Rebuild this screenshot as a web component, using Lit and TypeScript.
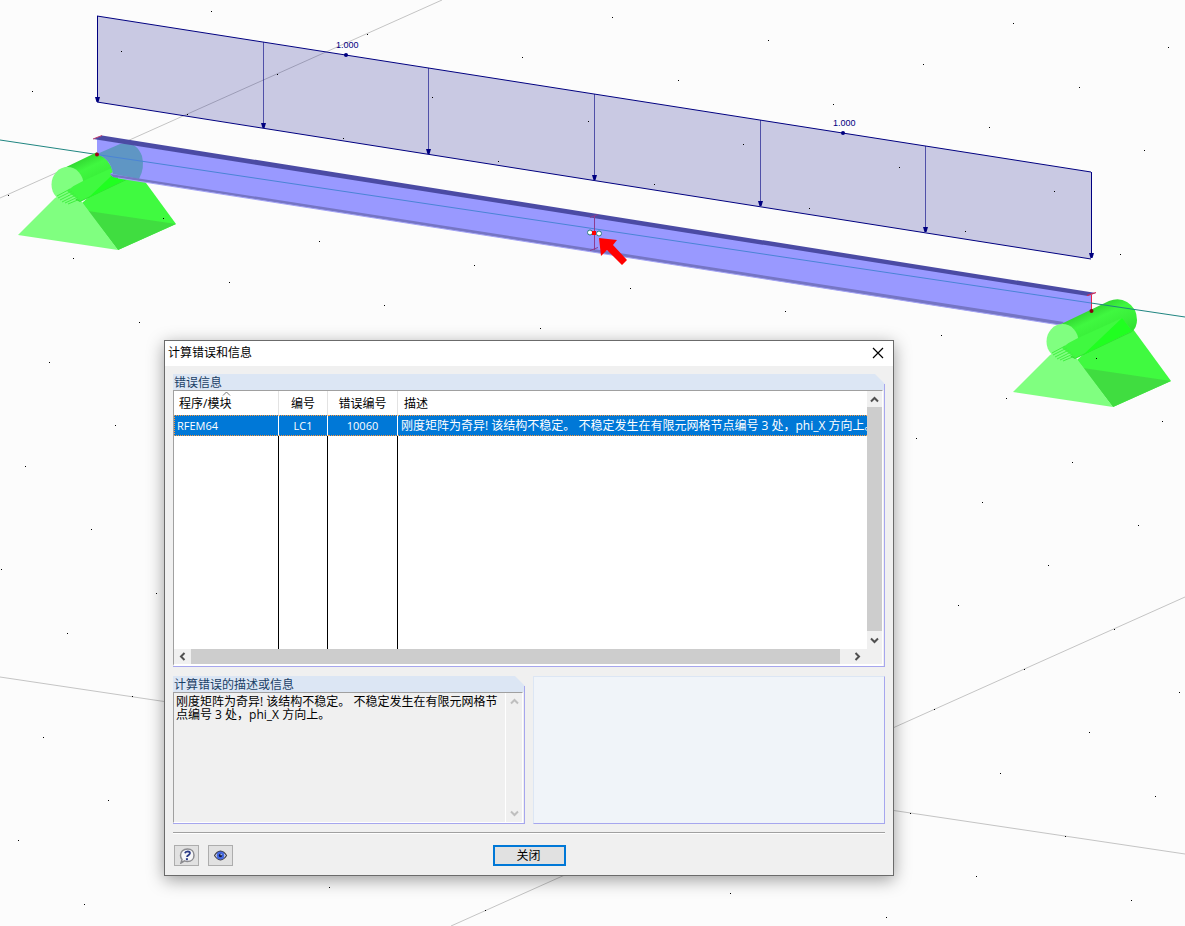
import { LitElement, html, css, svg } from "lit";
import { customElement } from "lit/decorators.js";

const MESSAGE =
  "刚度矩阵为奇异! 该结构不稳定。 不稳定发生在有限元网格节点编号 3 处，phi_X 方向上。";

// Work-plane grid points, generated from the two lattice directions.
function gridPoints() {
  const points: { x: number; y: number }[] = [];
  for (let j = -6; j <= 20; j++) {
    if (j === 0) continue;
    for (let i = -4; i <= 20; i++) {
      const x = Math.round(97.3 + 155.5 * i - 89.8 * j);
      const y = Math.round(154.5 + 23.3 * i + 40.2 * j);
      if (x >= 0 && x < 1185 && y > 0 && y < 926) points.push({ x, y });
    }
  }
  return points;
}

const LOAD_X = [97, 263, 428, 594, 760, 925, 1091];
const loadTop = (x: number) => 16 + (x - 97) * 0.157;

@customElement("model-view")
export class ModelView extends LitElement {
  static styles = css`
    :host { display: block; }
    svg { display: block; width: 100%; height: 100%; }
    .grid { stroke: #c4c4c4; stroke-width: 1; }
    .axis { stroke: #1f8580; stroke-width: 1; }
    .axis-in { stroke: #4a84d6; stroke-width: 1; }
    .area { fill: #000080; fill-opacity: 0.2; }
    .edge { stroke: #000080; stroke-width: 1; fill: none; }
    .shaft { stroke: #000080; stroke-width: 1; }
    .inner { stroke-opacity: 0.6; }
    .navy { fill: #000080; }
    .value { font: 9px "Liberation Sans", Arial, sans-serif; fill: #000080; }
    .dot { fill: #000; shape-rendering: crispEdges; }
  `;

  private support() {
    return svg`
      <path d="M82 203 L112 176 L138 172 L176 224 L118 250 Z" fill="#40fa40"/>
      <path d="M88 211 L176 224 L118 250 Z" fill="#40dd40"/>
      <path d="M18 235 L55 198 L70 190 L82 202 L118 250 Z" fill="#80ff80"/>
      <path d="M62 169 L114 144 Q124 140 132 145 Q142 151 142 163 Q142 170 137 175 L80 202 Q66 197 62 169 Z" fill="url(#tube)"/>
      <ellipse cx="67.500" cy="184.500" rx="16" ry="17.500" fill="#80ff80"/>
      <path d="M67 191 Q74 185 83 181 L127 161 L137 174 L80 201 Z" fill="#40f940"/>
      <path d="M127 161 L137 174 L88 198 Z" fill="#20ff20"/>
      <path d="M57 196 L70 189 M58 198 L72 191 M60 200 L74 193 M62 202 L76 195 M65 203 L78 197 M68 204 L80 199" stroke="#40ee40" stroke-width="1"/>
    `;
  }

  render() {
    return html`
      <svg viewBox="0 0 1185 926" preserveAspectRatio="xMidYMin slice" role="img" aria-label="Model">
        <defs>
          <linearGradient id="tube" gradientUnits="userSpaceOnUse" x1="88" y1="154" x2="106" y2="192">
            <stop offset="0" stop-color="#30d430"/>
            <stop offset="0.3" stop-color="#40f840"/>
            <stop offset="0.65" stop-color="#38ee38"/>
            <stop offset="1" stop-color="#30dc30"/>
          </linearGradient>
        </defs>

        <line class="grid" x1="0" y1="198" x2="442" y2="0"/>
        <line class="grid" x1="451" y1="926" x2="1185" y2="597"/>
        <line class="grid" x1="0" y1="677" x2="1185" y2="854"/>

        <path class="area" d="M97 16 L1091 172 L1091 259 L97 102 Z"/>
        <path class="edge" d="M97 16 L1091 172 M97 102 L1091 259"/>
        ${LOAD_X.map((x) => {
          const outer = x === 97 || x === 1091;
          const top = loadTop(x);
          return svg`
            <line class="shaft ${outer ? "" : "inner"}" x1=${x + 0.5} y1=${top} x2=${x + 0.5} y2=${top + 83}/>
            <path class="navy" d="M${x - 2} ${top + 81} h5 l-1.5 5 h-2 Z"/>`;
        })}
        <circle class="navy" cx="346" cy="55" r="2"/>
        <circle class="navy" cx="843" cy="133" r="2"/>
        <text class="value" x="336" y="48">1.000</text>
        <text class="value" x="833" y="126">1.000</text>

        <line class="axis" x1="0" y1="140" x2="97" y2="154.500"/>

        ${this.support()}
        <path d="M97 139 L1091 295 L1091 311 L1062 325 L113 177 L110 174 L113 172 Q109 158 97 154 Z" fill="#9999ff"/>
        <path d="M97 154 L120 144 Q136 140 142 156 Q145 168 139 179 L113 174 Q111 159 97 154 Z" fill="#5f96c4"/>
        <path d="M110 174 L1064 322 L1060 325 L113 177 Z" fill="#7575c4"/>
        <path d="M118 178 L1060 325" stroke="#a3a3f4" stroke-width="1"/>
        <path d="M93 139 L102 135.500 L1096 293 L1088 296 Z" fill="#4b4ba4"/>
        <path d="M93 139 L102 135.500" stroke="#c04070" stroke-width="1"/>
        <line class="axis-in" x1="97" y1="154.500" x2="1091" y2="303"/>
        <circle cx="97" cy="154.500" r="2" fill="#a00018"/>

        <path d="M1087 295.500 L1096 292.500 M1091.500 295 V310" stroke="#ee2244" stroke-width="1" fill="none"/>
        <g transform="translate(995 157)">${this.support()}</g>
        <line class="axis" x1="1091" y1="303" x2="1185" y2="317"/>
        <circle cx="1091.500" cy="311" r="2" fill="#8a0010"/>

        <path d="M594.500 216 V250 M590 217.500 L598 214.500 M590 250.500 L598 247.500" stroke="#8c3c90" stroke-width="1" fill="none"/>
        <circle cx="590" cy="232.500" r="2.500" fill="#fff" stroke="#2c8080" stroke-width="1"/>
        <circle cx="599" cy="233.500" r="2.500" fill="#fff" stroke="#2c8080" stroke-width="1"/>
        <rect x="592" y="231" width="4" height="4" fill="#f00"/>
        <path d="M599 238 L617 240 L613 245 L627 260 L622 265 L607 250 L601 256 Z" fill="#f00"/>

        ${gridPoints().map((p) => svg`<rect class="dot" x=${p.x} y=${p.y} width="1" height="1"/>`)}
      </svg>
    `;
  }
}

@customElement("error-dialog")
export class ErrorDialog extends LitElement {
  static styles = css`
    :host {
      display: flex;
      flex-direction: column;
      box-sizing: border-box;
      border: 1px solid #6b6b6b;
      background: #f0f0f0;
      box-shadow: 0 4px 16px rgba(0, 0, 0, 0.38);
      color: #000;
      font: 12px/16px "Open Sans", "Noto Sans CJK SC", sans-serif;
    }
    * { box-sizing: border-box; }
    button { margin: 0; padding: 0; font: inherit; color: inherit; }
    .title {
      display: flex;
      align-items: center;
      justify-content: space-between;
      height: 25px;
      padding: 0 8px 2px 3px;
      background: #fff;
    }
    h1, h2 { margin: 0; font: inherit; }
    .close { display: grid; place-items: center; width: 14px; height: 14px; border: 0; background: none; }
    .body { display: flex; flex-direction: column; flex: 1; padding: 8px 8px 9px; }
    .group { position: relative; display: flex; flex-direction: column; padding-right: 1px; border-bottom: 1px solid #a6a6ee; }
    .group::after {
      content: "";
      position: absolute;
      right: 0;
      top: 10px;
      bottom: 0;
      width: 1px;
      background: #a6a6ee;
    }
    .group h2 {
      height: 16px;
      margin-right: -1px;
      padding-left: 1px;
      background: #dce6f4;
      color: #1a3f66;
      line-height: 18px;
      clip-path: polygon(0 0, calc(100% - 10px) 0, 100% 10px, 100% 100%, 0 100%);
    }
    .frame {
      display: grid;
      flex: 1;
      margin-right: 1px;
      border-top: 1px solid #a0a0a0;
      border-left: 1px solid #a0a0a0;
      border-right: 1px solid #fff;
      border-bottom: 2px solid #fff;
      min-height: 0;
    }
    .list { height: 293px; }
    .list .frame { grid-template: 1fr 15px / 1fr 15px; }
    .cells { overflow: hidden; background: #fff; min-width: 0; }
    table { width: 100%; height: 100%; table-layout: fixed; border-collapse: separate; border-spacing: 0; }
    th, td { padding: 0; font-weight: 400; text-align: center; white-space: nowrap; overflow: hidden; }
    th { height: 24px; padding-top: 2px; border-right: 1px solid #e3e3e3; }
    th:first-child { position: relative; padding-left: 5px; text-align: left; }
    th:last-child { padding-left: 6px; text-align: left; border-right: 0; }
    .sort { position: absolute; left: 48px; top: 0; }
    .c1 { width: 105px; }
    .c2 { width: 49px; }
    .c3 { width: 70px; }
    .row td {
      height: 21px;
      background: #0078d7;
      color: #fff;
      border-top: 1px dotted #ff9a3c;
      border-bottom: 1px dotted #ff9a3c;
      border-right: 1px solid #fff;
      font-size: 11px;
      line-height: 16px;
    }
    .row td:first-child { padding-left: 2px; text-align: left; border-left: 1px dotted #ff9a3c; }
    .row td:last-child { padding-left: 3px; text-align: left; font-size: 12px; border-right: 0; }
    .rest td { border-right: 1px solid #000; }
    .rest td:last-child { border-right: 0; }
    .vbar { display: grid; grid-template-rows: 16px 1fr 18px; background: #f0f0f0; }
    .hbar { display: grid; grid-template-columns: 17px 1fr 27px; background: #f0f0f0; }
    .corner { background: #f0f0f0; }
    .thumb { background: #cdcdcd; }
    .arrow { display: grid; place-items: center; border: 0; background: #f0f0f0; }
    .arrow svg { fill: none; stroke: #505050; stroke-width: 2; }
    .arrow:disabled svg { stroke: #bfbfbf; }
    .hbar .arrow:last-child { padding-left: 8px; }
    .lower { display: grid; grid-template-columns: 1fr 1fr; gap: 8px; height: 148px; margin-top: 9px; }
    .detail .frame { grid-template-columns: 1fr 17px; border-bottom-width: 1px; }
    textarea {
      display: block;
      width: 100%;
      height: 100%;
      margin: 0;
      padding: 2px 2px;
      border: 0;
      outline: 0;
      resize: none;
      overflow: hidden;
      background: #f0f0f0;
      color: #000;
      font: inherit;
      line-height: 13px;
    }
    .detail .vbar { border-left: 1px solid #fff; }
    .preview { background: #f0f4f9; border: 1px solid #a6a6ee; border-top-color: #dce6f4; border-left-color: #dce6f4; }
    .actions {
      display: grid;
      grid-template-columns: 1fr auto 1fr;
      margin-top: 8px;
      padding: 12px 0 0 1px;
      border-top: 1px solid #a0a0a0;
      box-shadow: inset 0 1px #fff;
    }
    .tools { display: flex; gap: 9px; }
    .tool { display: grid; place-items: center; width: 25px; height: 21px; border: 1px solid #adadad; background: #e1e1e1; }
    .ok { width: 73px; height: 21px; padding-right: 2px; border: 2px solid #0078d7; background: #e1e1e1; line-height: 17px; }
  `;

  private chevron(path: string) {
    return html`<svg width="9" height="9" viewBox="0 0 9 9" aria-hidden="true"><path d=${path}></path></svg>`;
  }

  render() {
    const up = "M1 6.500 L4.500 3 L8 6.500";
    const down = "M1 2.500 L4.500 6 L8 2.500";
    return html`
      <header class="title">
        <h1>计算错误和信息</h1>
        <button class="close" aria-label="关闭">
          <svg width="12" height="12" viewBox="0 0 12 12" aria-hidden="true">
            <path d="M1 1 L11 11 M11 1 L1 11" stroke="#000" stroke-width="1.200"></path>
          </svg>
        </button>
      </header>
      <div class="body">
        <section class="group list">
          <h2>错误信息</h2>
          <div class="frame">
            <div class="cells">
              <table>
                <colgroup><col class="c1" /><col class="c2" /><col class="c3" /><col /></colgroup>
                <thead>
                  <tr>
                    <th scope="col">
                      程序/模块
                      <svg class="sort" width="9" height="5" viewBox="0 0 9 5" aria-hidden="true">
                        <path d="M1 4.500 L4.500 1 L8 4.500" fill="none" stroke="#777"></path>
                      </svg>
                    </th>
                    <th scope="col">编号</th>
                    <th scope="col">错误编号</th>
                    <th scope="col">描述</th>
                  </tr>
                </thead>
                <tbody>
                  <tr class="row"><td>RFEM64</td><td>LC1</td><td>10060</td><td>${MESSAGE}</td></tr>
                  <tr class="rest"><td></td><td></td><td></td><td></td></tr>
                </tbody>
              </table>
            </div>
            <div class="vbar">
              <button class="arrow" aria-label="上">${this.chevron(up)}</button>
              <div class="thumb"></div>
              <button class="arrow" aria-label="下">${this.chevron(down)}</button>
            </div>
            <div class="hbar">
              <button class="arrow" aria-label="左">${this.chevron("M6.500 1 L3 4.500 L6.500 8")}</button>
              <div class="thumb"></div>
              <button class="arrow" aria-label="右">${this.chevron("M2.500 1 L6 4.500 L2.500 8")}</button>
            </div>
            <div class="corner"></div>
          </div>
        </section>
        <div class="lower">
          <section class="group detail">
            <h2><label for="detail">计算错误的描述或信息</label></h2>
            <div class="frame">
              <textarea id="detail" readonly .value=${MESSAGE}></textarea>
              <div class="vbar">
                <button class="arrow" disabled aria-label="上">${this.chevron(up)}</button>
                <div></div>
                <button class="arrow" disabled aria-label="下">${this.chevron(down)}</button>
              </div>
            </div>
          </section>
          <div class="preview"></div>
        </div>
        <footer class="actions">
          <div class="tools">
            <button class="tool" aria-label="帮助">
              <svg width="16" height="16" viewBox="0 0 16 16" aria-hidden="true">
                <path d="M8.500 1 C12.600 1 15 3.700 15 7.200 C15 11 12.300 13.500 8.500 13.500 C7.300 13.500 6.500 13.300 5.500 12.900 L2 15 L3 11.500 C1.900 10.400 1.500 9 1.500 7.200 C1.500 3.700 4.400 1 8.500 1 Z" fill="#f6f6f8" stroke="#8c8c90" stroke-width="1.500"></path>
                <path d="M6 5.300 Q6.500 3.400 8.700 3.400 Q11.200 3.500 10.800 5.500 Q10.500 6.600 9.200 7.300 Q8.200 7.800 8.100 9" fill="none" stroke="#2a3a86" stroke-width="1.900"></path>
                <rect x="6.900" y="10.200" width="2" height="2" fill="#2a3a86"></rect>
              </svg>
            </button>
            <button class="tool" aria-label="显示">
              <svg width="14" height="14" viewBox="0 0 14 14" aria-hidden="true">
                <path d="M0.500 6.500 Q3 2.500 6.500 2.200 Q10 2.500 12.500 6.500 Q10 10.500 6.500 10.800 Q3 10.500 0.500 6.500 Z" fill="#e8e8ee" stroke="#3c3c44" stroke-width="1.200"></path>
                <circle cx="6.500" cy="6.500" r="3.900" fill="#4468e0"></circle>
                <circle cx="6.500" cy="6.500" r="1.700" fill="#10183c"></circle>
                <rect x="6.500" y="5" width="1.300" height="1.300" fill="#b8d0ff"></rect>
              </svg>
            </button>
          </div>
          <button class="ok">关闭</button>
        </footer>
      </div>
    `;
  }
}

@customElement("app-root")
export class AppRoot extends LitElement {
  static styles = css`
    :host {
      display: block;
      position: relative;
      height: 100vh;
      overflow: hidden;
      background: #fcfcfc;
    }
    .model { height: 100%; }
    .dialog { position: absolute; left: 164px; top: 340px; width: 730px; }
  `;

  render() {
    return html`
      <model-view class="model"></model-view>
      <error-dialog class="dialog" role="dialog" aria-label="计算错误和信息"></error-dialog>
    `;
  }
}
